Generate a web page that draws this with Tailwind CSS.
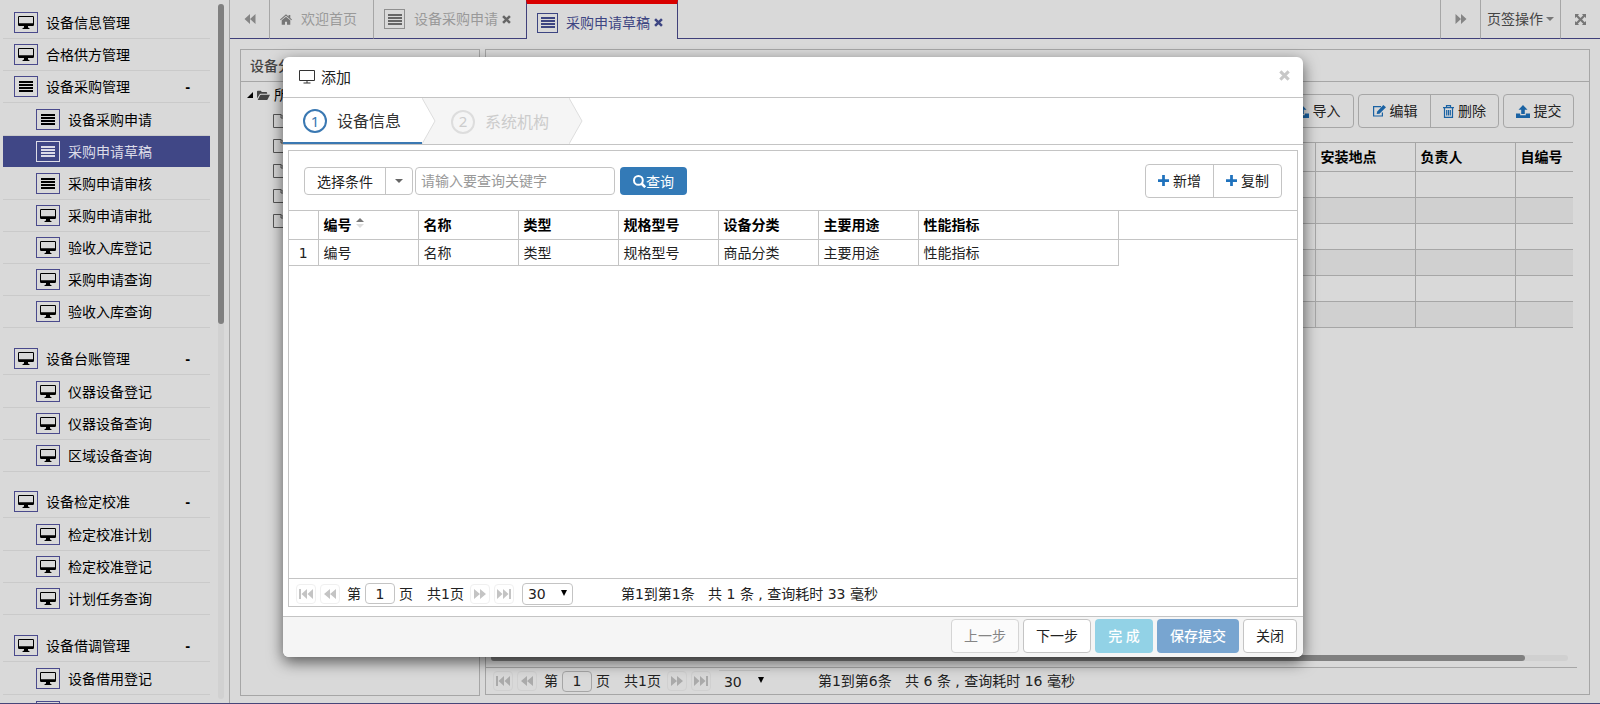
<!DOCTYPE html>
<html lang="zh-CN">
<head>
<meta charset="utf-8">
<title>设备采购管理</title>
<script src="https://cdn.jsdelivr.net/npm/@tailwindcss/browser@4"></script>
</head>
<body class="relative flex h-screen flex-col overflow-hidden border-b border-[#46467a] bg-[#d9d9d9] font-['Noto_Sans','Noto_Sans_CJK_SC',sans-serif] text-sm leading-5 text-black">

<svg class="hidden" aria-hidden="true">
  <symbol id="desktop" viewBox="0 0 16 13"><path fill="currentColor" fill-rule="evenodd" d="M1.200 0h13.600A1.200 1.200 0 0 1 16 1.200v7.600a1.200 1.200 0 0 1-1.200 1.200H10v1.500l1.500.7v.8h-7v-.8L6 11.500V10H1.200A1.200 1.200 0 0 1 0 8.800V1.200A1.200 1.200 0 0 1 1.200 0zM1 1v6.200h14V1z"/></symbol>
  <symbol id="lines" viewBox="0 0 14 11"><path fill="currentColor" d="M0 0h14v2H0zM0 3h14v2H0zM0 6h14v2H0zM0 9h14v2H0z"/></symbol>
  <symbol id="back" viewBox="0 0 12 10"><path fill="currentColor" d="M6 0v10L.5 5zM11.500 0v10L6 5z"/></symbol>
  <symbol id="forward" viewBox="0 0 12 10"><path fill="currentColor" d="M.5 0v10L6 5zM6 0v10l5.500-5z"/></symbol>
  <symbol id="pfirst" viewBox="0 0 14 12"><path fill="currentColor" d="M0 1h2v10H0zM8 1v10L2.500 6zM14 1v10L8.500 6z"/></symbol>
  <symbol id="pprev" viewBox="0 0 14 12"><path fill="currentColor" d="M7 1v10L1 6zM13 1v10L7 6z"/></symbol>
  <symbol id="pnext" viewBox="0 0 14 12"><path fill="currentColor" d="M1 1v10l6-5zM7 1v10l6-5z"/></symbol>
  <symbol id="plast" viewBox="0 0 14 12"><path fill="currentColor" d="M12 1h2v10h-2zM0 1v10l5.500-5zM6 1v10l5.500-5z"/></symbol>
  <symbol id="home" viewBox="0 0 14 12"><path fill="currentColor" d="M7 0 0 6l.8.9L7 1.700l6.200 5.200.8-.9-2-1.700V.8h-2v1.700zM2 6.800V12h3.800V8.500h2.400V12H12V6.800L7 2.700z"/></symbol>
  <symbol id="times" viewBox="0 0 10 10"><path fill="none" stroke="currentColor" stroke-width="2.800" d="m1.200 1.200 7.600 7.600m0-7.600L1.200 8.800"/></symbol>
  <symbol id="expand" viewBox="0 0 12 12"><path fill="currentColor" d="M0 0h4.500L3.100 1.400 6 4.300l2.900-2.900L7.500 0H12v4.500l-1.400-1.400L7.700 6l2.900 2.900L12 7.500V12H7.500l1.400-1.400L6 7.700l-2.900 2.900L4.500 12H0V7.500l1.400 1.400L4.300 6 1.400 3.100 0 4.500z"/></symbol>
  <symbol id="caret" viewBox="0 0 8 4"><path fill="currentColor" d="M0 0h8L4 4z"/></symbol>
  <symbol id="drop" viewBox="0 0 6 6"><path fill="currentColor" d="M0 0h6L3 6z"/></symbol>
  <symbol id="folder" viewBox="0 0 15 12"><path fill="currentColor" d="M0 9.500V1.500Q0 .5 1 .5h3.500l1 1.500h5.200q1 0 1 1V4H4.200Q3.200 4 2.700 5zM.8 11.300 3.500 5.800Q3.800 5 4.800 5H15l-2.800 5.500q-.5.8-1.500.8z"/></symbol>
  <symbol id="file" viewBox="0 0 12 14"><path fill="none" stroke="currentColor" d="M.5.5H8l3.500 3.500v9.500H.5zM8 .5V4h3.500"/></symbol>
  <symbol id="upload" viewBox="0 0 14 13"><path fill="currentColor" d="M7 0 2.500 4.800h2.700V9h3.600V4.800h2.700zM0 8.500h4.200v1.700h5.600V8.500H14V13H0z"/></symbol>
  <symbol id="edit" viewBox="0 0 14 12"><path fill="none" stroke="currentColor" stroke-width="1.200" d="M9 1.600H1.600V11h8.800V7.500"/><path fill="currentColor" d="m4.700 9 .5-2.500L11.300 0 14 2.300 7.500 8.700z"/></symbol>
  <symbol id="trash" viewBox="0 0 11 13"><path fill="none" stroke="currentColor" stroke-width="1.200" d="M0 2.600h11M3.500 2.500V.700h4v1.800M1.500 3v9.300h8V3M3.700 5v5.500M5.500 5v5.500M7.300 5v5.500"/></symbol>
  <symbol id="plus" viewBox="0 0 12 12"><path fill="currentColor" d="M4.500 0h3v4.500H12v3H7.500V12h-3V7.500H0v-3h4.500z"/></symbol>
  <symbol id="search" viewBox="0 0 13 13"><path fill="none" stroke="currentColor" stroke-width="2" d="M9.800 5.400a4.400 4.400 0 1 1-8.800 0 4.400 4.400 0 0 1 8.800 0z"/><path stroke="currentColor" stroke-width="2.600" d="m8.500 8.500 3.700 3.700"/></symbol>
</svg>

<div class="flex min-h-0 flex-1">
  <!-- Side menu -->
  <aside class="flex w-[230px] shrink-0 justify-between overflow-hidden border-r border-[#a6a6a6]">
    <nav class="ml-[3px] w-[207px] shrink-0 pt-[7px]">
      <a href="#" class="flex h-8 items-center gap-2 border-b border-[#cacaca] pl-[11px]"><span class="flex h-[21px] w-6 items-center justify-center border border-[#4a4a8c]"><svg class="h-[13px] w-4"><use href="#desktop"/></svg></span>设备信息管理</a>
      <a href="#" class="flex h-8 items-center gap-2 border-b border-[#cacaca] pl-[11px]"><span class="flex h-[21px] w-6 items-center justify-center border border-[#4a4a8c]"><svg class="h-[13px] w-4"><use href="#desktop"/></svg></span>合格供方管理</a>

      <a href="#" class="flex h-8 items-center gap-2 border-b border-[#cacaca] pl-[11px]"><span class="flex h-[21px] w-6 items-center justify-center border border-[#4a4a8c]"><svg class="h-[11px] w-[14px]"><use href="#lines"/></svg></span><span class="flex-1">设备采购管理</span><span class="mr-5 font-bold">-</span></a>
      <div class="mb-[15px] pt-px">
        <a href="#" class="flex h-8 items-center gap-2 border-b border-[#cacaca] pl-[33px]"><span class="flex h-[21px] w-6 items-center justify-center border border-[#4a4a8c]"><svg class="h-[11px] w-[14px]"><use href="#lines"/></svg></span>设备采购申请</a>
        <a href="#" class="flex h-8 items-center gap-2 border-b border-[#d9d9d9] bg-[#404786] pl-[33px] text-[#dcdce8]"><span class="flex h-[21px] w-6 items-center justify-center border border-[#dcdce8]"><svg class="h-[11px] w-[14px]"><use href="#lines"/></svg></span>采购申请草稿</a>
        <a href="#" class="flex h-8 items-center gap-2 border-b border-[#cacaca] pl-[33px]"><span class="flex h-[21px] w-6 items-center justify-center border border-[#4a4a8c]"><svg class="h-[11px] w-[14px]"><use href="#lines"/></svg></span>采购申请审核</a>
        <a href="#" class="flex h-8 items-center gap-2 border-b border-[#cacaca] pl-[33px]"><span class="flex h-[21px] w-6 items-center justify-center border border-[#4a4a8c]"><svg class="h-[13px] w-4"><use href="#desktop"/></svg></span>采购申请审批</a>
        <a href="#" class="flex h-8 items-center gap-2 border-b border-[#cacaca] pl-[33px]"><span class="flex h-[21px] w-6 items-center justify-center border border-[#4a4a8c]"><svg class="h-[13px] w-4"><use href="#desktop"/></svg></span>验收入库登记</a>
        <a href="#" class="flex h-8 items-center gap-2 border-b border-[#cacaca] pl-[33px]"><span class="flex h-[21px] w-6 items-center justify-center border border-[#4a4a8c]"><svg class="h-[13px] w-4"><use href="#desktop"/></svg></span>采购申请查询</a>
        <a href="#" class="flex h-8 items-center gap-2 border-b border-[#cacaca] pl-[33px]"><span class="flex h-[21px] w-6 items-center justify-center border border-[#4a4a8c]"><svg class="h-[13px] w-4"><use href="#desktop"/></svg></span>验收入库查询</a>
      </div>

      <a href="#" class="flex h-8 items-center gap-2 border-b border-[#cacaca] pl-[11px]"><span class="flex h-[21px] w-6 items-center justify-center border border-[#4a4a8c]"><svg class="h-[13px] w-4"><use href="#desktop"/></svg></span><span class="flex-1">设备台账管理</span><span class="mr-5 font-bold">-</span></a>
      <div class="mb-[14px] pt-px">
        <a href="#" class="flex h-8 items-center gap-2 border-b border-[#cacaca] pl-[33px]"><span class="flex h-[21px] w-6 items-center justify-center border border-[#4a4a8c]"><svg class="h-[13px] w-4"><use href="#desktop"/></svg></span>仪器设备登记</a>
        <a href="#" class="flex h-8 items-center gap-2 border-b border-[#cacaca] pl-[33px]"><span class="flex h-[21px] w-6 items-center justify-center border border-[#4a4a8c]"><svg class="h-[13px] w-4"><use href="#desktop"/></svg></span>仪器设备查询</a>
        <a href="#" class="flex h-8 items-center gap-2 border-b border-[#cacaca] pl-[33px]"><span class="flex h-[21px] w-6 items-center justify-center border border-[#4a4a8c]"><svg class="h-[13px] w-4"><use href="#desktop"/></svg></span>区域设备查询</a>
      </div>

      <a href="#" class="flex h-8 items-center gap-2 border-b border-[#cacaca] pl-[11px]"><span class="flex h-[21px] w-6 items-center justify-center border border-[#4a4a8c]"><svg class="h-[13px] w-4"><use href="#desktop"/></svg></span><span class="flex-1">设备检定校准</span><span class="mr-5 font-bold">-</span></a>
      <div class="mb-[15px] pt-px">
        <a href="#" class="flex h-8 items-center gap-2 border-b border-[#cacaca] pl-[33px]"><span class="flex h-[21px] w-6 items-center justify-center border border-[#4a4a8c]"><svg class="h-[13px] w-4"><use href="#desktop"/></svg></span>检定校准计划</a>
        <a href="#" class="flex h-8 items-center gap-2 border-b border-[#cacaca] pl-[33px]"><span class="flex h-[21px] w-6 items-center justify-center border border-[#4a4a8c]"><svg class="h-[13px] w-4"><use href="#desktop"/></svg></span>检定校准登记</a>
        <a href="#" class="flex h-8 items-center gap-2 border-b border-[#cacaca] pl-[33px]"><span class="flex h-[21px] w-6 items-center justify-center border border-[#4a4a8c]"><svg class="h-[13px] w-4"><use href="#desktop"/></svg></span>计划任务查询</a>
      </div>

      <a href="#" class="flex h-8 items-center gap-2 border-b border-[#cacaca] pl-[11px]"><span class="flex h-[21px] w-6 items-center justify-center border border-[#4a4a8c]"><svg class="h-[13px] w-4"><use href="#desktop"/></svg></span><span class="flex-1">设备借调管理</span><span class="mr-5 font-bold">-</span></a>
      <div class="pt-px">
        <a href="#" class="flex h-8 items-center gap-2 border-b border-[#cacaca] pl-[33px]"><span class="flex h-[21px] w-6 items-center justify-center border border-[#4a4a8c]"><svg class="h-[13px] w-4"><use href="#desktop"/></svg></span>设备借用登记</a>
        <a href="#" class="flex h-8 items-center gap-2 pl-[33px]"><span class="flex h-[21px] w-6 items-center justify-center border border-[#4a4a8c]"><svg class="h-[13px] w-4"><use href="#desktop"/></svg></span></a>
      </div>
    </nav>
    <div class="mt-1 mr-[5px] mb-1 w-1.5 rounded-full bg-[#d1d1d1]"><div class="h-[46%] rounded-full bg-[#808080]"></div></div>
  </aside>

  <main class="flex min-w-0 flex-1 flex-col">
    <!-- Tab bar -->
    <header class="flex h-[39px] shrink-0 text-[#858585]">
      <button aria-label="向左" class="flex w-10 items-center justify-center border-r border-b border-r-[#a6a6a6] border-b-[#40407a]"><svg class="h-[10px] w-3"><use href="#back"/></svg></button>
      <a href="#" class="flex w-[104px] items-center gap-[9px] border-r border-b border-r-[#a6a6a6] border-b-[#40407a] pl-[10px] text-[#999]"><svg class="h-[11px] w-3 text-[#777]"><use href="#home"/></svg>欢迎首页</a>
      <a href="#" class="flex w-[152px] items-center border-b border-[#40407a] pl-[10px] text-[#999]"><span class="mr-[9px] flex h-5 w-[21px] items-center justify-center border border-[#8f8f8f] text-[#666]"><svg class="h-[11px] w-[14px]"><use href="#lines"/></svg></span>设备采购申请<svg class="ml-1 h-[9px] w-[9px] text-[#666]"><use href="#times"/></svg></a>
      <a href="#" class="flex w-[152px] items-center border-x border-t-4 border-x-[#40407a] border-t-[#d90000] pt-0.5 pl-[10px] text-[#3d4582]"><span class="mr-2 flex h-5 w-[21px] items-center justify-center border border-[#3d4582]"><svg class="h-[11px] w-[14px]"><use href="#lines"/></svg></span>采购申请草稿<svg class="ml-1 h-[9px] w-[9px]"><use href="#times"/></svg></a>
      <div class="flex-1 border-b border-[#40407a]"></div>
      <button aria-label="向右" class="flex w-10 items-center justify-center border-b border-l border-b-[#40407a] border-l-[#a6a6a6]"><svg class="h-[10px] w-3"><use href="#forward"/></svg></button>
      <button class="flex w-20 items-center justify-center gap-[3px] border-b border-l border-b-[#40407a] border-l-[#a6a6a6] text-[#444]">页签操作<svg class="h-1 w-2 text-[#777]"><use href="#caret"/></svg></button>
      <button aria-label="全屏" class="flex w-10 items-center justify-center border-b border-l border-b-[#40407a] border-l-[#a6a6a6] text-[#777]"><svg class="h-[11px] w-[11px]"><use href="#expand"/></svg></button>
    </header>

    <div class="flex min-h-0 flex-1 gap-[5px] pt-[10px] pr-[10px] pb-[7px] pl-[10px]">
      <!-- Category tree -->
      <section class="w-[240px] shrink-0 border border-[#a6a6a6]">
        <h2 class="flex h-8 items-center border-b border-[#a6a6a6] pl-[9px] font-medium text-[#444]">设备分类</h2>
        <div class="flex h-[26px] items-center pl-[6px]"><svg class="mr-1 h-1.5 w-1.5" viewBox="0 0 6 6"><path d="M6 0v6H0z"/></svg><svg class="mr-1 h-[11px] w-[13px] text-[#444]"><use href="#folder"/></svg>所有</div>
        <ul class="pl-8 text-[#555]">
          <li class="flex h-[25px] items-center"><svg class="h-[14px] w-3"><use href="#file"/></svg></li>
          <li class="flex h-[25px] items-center"><svg class="h-[14px] w-3"><use href="#file"/></svg></li>
          <li class="flex h-[25px] items-center"><svg class="h-[14px] w-3"><use href="#file"/></svg></li>
          <li class="flex h-[25px] items-center"><svg class="h-[14px] w-3"><use href="#file"/></svg></li>
          <li class="flex h-[25px] items-center"><svg class="h-[14px] w-3"><use href="#file"/></svg></li>
        </ul>
      </section>

      <!-- Draft list -->
      <section class="mb-px flex min-w-0 flex-1 flex-col border border-[#a6a6a6]">
        <div class="h-8 shrink-0 border-b border-[#a6a6a6]"></div>
        <div class="flex shrink-0 justify-end gap-1 pt-3 pr-[15px] text-[#222]">
          <button class="flex h-[34px] w-[73px] items-center justify-center gap-1 rounded border border-[#a6a6a6]"><svg class="h-[13px] w-[14px] text-[#1a62a3]"><use href="#upload"/></svg>导入</button>
          <div class="flex h-[34px] rounded border border-[#a6a6a6]">
            <button class="flex w-[72px] items-center justify-center gap-1 border-r border-[#a6a6a6]"><svg class="h-3 w-[14px] text-[#1a62a3]"><use href="#edit"/></svg>编辑</button>
            <button class="flex w-[67px] items-center justify-center gap-1"><svg class="h-[13px] w-[11px] text-[#1a62a3]"><use href="#trash"/></svg>删除</button>
          </div>
          <button class="flex h-[34px] w-[71px] items-center justify-center gap-1 rounded border border-[#a6a6a6]"><svg class="h-[13px] w-[14px] text-[#1a62a3]"><use href="#upload"/></svg>提交</button>
        </div>
        <div class="mt-[14px] min-h-0 flex-1 pr-4 pl-[5px]">
          <table class="w-full table-fixed border-t border-[#a6a6a6] text-left">
            <thead><tr class="h-[29px] border-b border-[#a6a6a6]"><th></th><th class="w-[100px] border-l border-[#a6a6a6] pl-[5px]">安装地点</th><th class="w-[100px] border-l border-[#a6a6a6] pl-[5px]">负责人</th><th class="w-[58px] border-l border-[#a6a6a6] pl-[5px] whitespace-nowrap">自编号</th></tr></thead>
            <tbody>
              <tr class="h-[26px] border-b border-[#a6a6a6]"><td></td><td class="border-l border-[#a6a6a6]"></td><td class="border-l border-[#a6a6a6]"></td><td class="border-l border-[#a6a6a6]"></td></tr>
              <tr class="h-[26px] border-b border-[#a6a6a6] bg-[#d0d0d0]"><td></td><td class="border-l border-[#a6a6a6]"></td><td class="border-l border-[#a6a6a6]"></td><td class="border-l border-[#a6a6a6]"></td></tr>
              <tr class="h-[26px] border-b border-[#a6a6a6]"><td></td><td class="border-l border-[#a6a6a6]"></td><td class="border-l border-[#a6a6a6]"></td><td class="border-l border-[#a6a6a6]"></td></tr>
              <tr class="h-[26px] border-b border-[#a6a6a6] bg-[#d0d0d0]"><td></td><td class="border-l border-[#a6a6a6]"></td><td class="border-l border-[#a6a6a6]"></td><td class="border-l border-[#a6a6a6]"></td></tr>
              <tr class="h-[26px] border-b border-[#a6a6a6]"><td></td><td class="border-l border-[#a6a6a6]"></td><td class="border-l border-[#a6a6a6]"></td><td class="border-l border-[#a6a6a6]"></td></tr>
              <tr class="h-[26px] border-b border-[#a6a6a6] bg-[#d0d0d0]"><td></td><td class="border-l border-[#a6a6a6]"></td><td class="border-l border-[#a6a6a6]"></td><td class="border-l border-[#a6a6a6]"></td></tr>
            </tbody>
          </table>
        </div>
        <div class="mr-[21px] mb-[6px] ml-[5px] h-1.5 shrink-0 rounded-full bg-[#d0d0d0]"><div class="h-full w-[96%] rounded-full bg-[#808080]"></div></div>
        <div class="mr-3 flex h-[27px] shrink-0 items-center border-t border-[#a6a6a6] pl-[7px] font-['DejaVu_Sans','Noto_Sans_CJK_SC',sans-serif] text-[#222]">
          <button aria-label="首页" class="flex h-5 w-5 items-center justify-center rounded border border-[#d0d0d0] text-[#aaa]"><svg class="h-3 w-[14px]"><use href="#pfirst"/></svg></button>
          <button aria-label="上一页" class="ml-1 flex h-5 w-5 items-center justify-center rounded border border-[#d0d0d0] text-[#aaa]"><svg class="h-3 w-[14px]"><use href="#pprev"/></svg></button>
          <label class="ml-[7px] flex items-center gap-1">第<input aria-label="页码" value="1" class="h-[21px] w-[30px] rounded border border-[#a6a6a6] text-center">页</label>
          <span class="mx-[6px] pl-2">共1页</span>
          <button aria-label="下一页" class="flex h-5 w-5 items-center justify-center rounded border border-[#d0d0d0] text-[#aaa]"><svg class="h-3 w-[14px]"><use href="#pnext"/></svg></button>
          <button aria-label="末页" class="ml-1 flex h-5 w-5 items-center justify-center rounded border border-[#d0d0d0] text-[#aaa]"><svg class="h-3 w-[14px]"><use href="#plast"/></svg></button>
          <span class="relative ml-2 flex"><select aria-label="每页条数" class="h-[22px] w-[51px] appearance-none border-t border-[#c4c4c4] pl-[5px]"><option>30</option></select><svg class="pointer-events-none absolute top-[7px] right-[6px] h-1.5 w-1.5 text-black"><use href="#drop"/></svg></span>
          <span class="ml-12 whitespace-pre">第1到第6条   共 6 条 , 查询耗时 16 毫秒</span>
        </div>
      </section>
    </div>
  </main>
</div>

<!-- Add dialog -->
<div role="dialog" aria-labelledby="dlg-title" class="absolute top-[57px] right-[297px] bottom-[46px] left-[283px] flex flex-col overflow-hidden rounded-md bg-white text-[#222] shadow-[0_5px_15px_rgba(0,0,0,0.6)]">
  <div class="flex h-[41px] shrink-0 items-center border-b border-[#c4c4c4] pr-[13px] pl-4">
    <svg class="mr-[6px] h-[14px] w-4 text-[#333]" viewBox="0 0 16 14"><path fill="none" stroke="currentColor" d="M.5.500h15v10H.5zM8 10.500v2.500M4.500 13h7"/></svg>
    <h2 id="dlg-title" class="flex-1 text-[15px]">添加</h2>
    <button aria-label="关闭窗口" class="mb-1 text-[#c8c8c8]"><svg class="h-[11px] w-[11px]"><use href="#times"/></svg></button>
  </div>
  <ol class="flex h-[47px] shrink-0 border-b border-[#c4c4c4] text-base">
    <li class="flex w-[139px] items-center gap-[10px] border-b-2 border-[#3a78b2] pt-0.5 pl-5 text-[#333]"><span class="flex h-6 w-6 items-center justify-center rounded-full border-2 border-[#3a78b2] text-[15px] text-[#3a78b2]">1</span>设备信息</li>
    <li class="relative flex w-[147px] items-center gap-[10px] bg-[#f5f5f5] pt-px pl-[29px] text-[#ccc]">
      <svg class="absolute top-0 left-0 h-full w-[14px]" viewBox="0 0 14 46" preserveAspectRatio="none"><path fill="#fff" stroke="#ddd" d="M0 0 13 23 0 46"/></svg>
      <span class="flex h-6 w-6 items-center justify-center rounded-full border-2 border-[#ddd] text-[15px]">2</span>系统机构
      <svg class="absolute top-0 left-full h-full w-[14px]" viewBox="0 0 14 46" preserveAspectRatio="none"><path fill="#f5f5f5" stroke="#ddd" d="M0 0 13 23 0 46"/></svg>
    </li>
  </ol>

  <div class="mx-[5px] mt-[5px] mb-[9px] flex min-h-0 flex-1 flex-col border border-[#c4c4c4]">
    <div class="flex h-[59px] shrink-0 items-center pr-[15px] pl-[15px]">
      <div class="flex h-7 rounded border border-[#c4c4c4]">
        <button class="w-[81px] border-r border-[#c4c4c4] pt-0.5">选择条件</button>
        <button aria-label="展开条件" class="flex w-[26px] items-center justify-center text-[#666]"><svg class="h-1 w-2"><use href="#caret"/></svg></button>
      </div>
      <input aria-label="关键字" placeholder="请输入要查询关键字" class="ml-0.5 h-7 w-[200px] rounded border border-[#c4c4c4] pl-[5px] placeholder:text-[#999]">
      <button class="ml-[5px] flex h-7 w-[67px] items-center justify-center rounded bg-[#337ab7] pt-0.5 text-white"><svg class="h-[13px] w-[13px]"><use href="#search"/></svg>查询</button>
      <div class="ml-auto flex h-[34px] rounded border border-[#c4c4c4]">
        <button class="flex w-[68px] items-center justify-center gap-1 border-r border-[#c4c4c4]"><svg class="h-[11px] w-[11px] text-[#1f72bd]"><use href="#plus"/></svg>新增</button>
        <button class="flex w-[67px] items-center justify-center gap-1"><svg class="h-[11px] w-[11px] text-[#1f72bd]"><use href="#plus"/></svg>复制</button>
      </div>
    </div>
    <div class="min-h-0 flex-1">
      <table class="w-full table-fixed text-left">
        <thead><tr class="h-[29px] border-y border-[#c4c4c4] text-black">
          <th class="w-[29px] border-r border-[#c4c4c4]"></th>
          <th class="w-[100px] border-r border-[#c4c4c4] pl-[5px]"><button class="flex items-center gap-1">编号<svg class="mb-1 h-[10px] w-2" viewBox="0 0 8 10"><path fill="#777" d="M0 4h8L4 0z"/><path fill="#ddd" d="M0 6h8l-4 4z"/></svg></button></th>
          <th class="w-[100px] border-r border-[#c4c4c4] pl-[5px]">名称</th>
          <th class="w-[100px] border-r border-[#c4c4c4] pl-[5px]">类型</th>
          <th class="w-[100px] border-r border-[#c4c4c4] pl-[5px]">规格型号</th>
          <th class="w-[100px] border-r border-[#c4c4c4] pl-[5px]">设备分类</th>
          <th class="w-[100px] border-r border-[#c4c4c4] pl-[5px]">主要用途</th>
          <th class="w-[200px] border-r border-[#c4c4c4] pl-[5px]">性能指标</th>
          <th></th>
        </tr></thead>
        <tbody><tr class="h-[26px]">
          <td class="border-r border-b border-[#c4c4c4] text-center font-['DejaVu_Sans']">1</td>
          <td class="border-r border-b border-[#c4c4c4] pl-[5px]">编号</td>
          <td class="border-r border-b border-[#c4c4c4] pl-[5px]">名称</td>
          <td class="border-r border-b border-[#c4c4c4] pl-[5px]">类型</td>
          <td class="border-r border-b border-[#c4c4c4] pl-[5px]">规格型号</td>
          <td class="border-r border-b border-[#c4c4c4] pl-[5px]">商品分类</td>
          <td class="border-r border-b border-[#c4c4c4] pl-[5px]">主要用途</td>
          <td class="border-r border-b border-[#c4c4c4] pl-[5px]">性能指标</td>
          <td></td>
        </tr></tbody>
      </table>
    </div>
    <div class="flex h-7 shrink-0 items-center border-t border-[#c4c4c4] pt-0.5 pl-[7px] font-['DejaVu_Sans','Noto_Sans_CJK_SC',sans-serif]">
      <button aria-label="首页" class="flex h-5 w-5 items-center justify-center rounded border border-[#f0f0f0] text-[#c4c4c4]"><svg class="h-3 w-[14px]"><use href="#pfirst"/></svg></button>
      <button aria-label="上一页" class="ml-1 flex h-5 w-5 items-center justify-center rounded border border-[#f0f0f0] text-[#c4c4c4]"><svg class="h-3 w-[14px]"><use href="#pprev"/></svg></button>
      <label class="ml-[7px] flex items-center gap-1">第<input aria-label="页码" value="1" class="h-[21px] w-[30px] rounded border border-[#c4c4c4] text-center">页</label>
      <span class="mx-[6px] pl-2">共1页</span>
      <button aria-label="下一页" class="flex h-5 w-5 items-center justify-center rounded border border-[#f0f0f0] text-[#c4c4c4]"><svg class="h-3 w-[14px]"><use href="#pnext"/></svg></button>
      <button aria-label="末页" class="ml-1 flex h-5 w-5 items-center justify-center rounded border border-[#f0f0f0] text-[#c4c4c4]"><svg class="h-3 w-[14px]"><use href="#plast"/></svg></button>
      <span class="relative ml-2 flex"><select aria-label="每页条数" class="h-[22px] w-[51px] appearance-none rounded border border-[#c4c4c4] pl-[5px]"><option>30</option></select><svg class="pointer-events-none absolute top-[7px] right-[6px] h-1.5 w-1.5 text-black"><use href="#drop"/></svg></span>
      <span class="ml-12 whitespace-pre">第1到第1条   共 1 条 , 查询耗时 33 毫秒</span>
    </div>
  </div>

  <div class="flex h-[41px] shrink-0 items-start justify-end gap-1 border-t border-[#c4c4c4] bg-[#f5f5f5] pt-0.5 pr-[6px]">
    <button disabled class="h-[34px] w-[68px] rounded border border-[#d5d5d5] bg-[#fbfbfb] text-[#858585]">上一步</button>
    <button class="h-[34px] w-[68px] rounded border border-[#c4c4c4] bg-white">下一步</button>
    <button disabled class="h-[34px] w-[58px] rounded bg-[#92d2e6] font-medium text-white">完 成</button>
    <button disabled class="h-[34px] w-[82px] rounded bg-[#78a5d0] font-medium text-white">保存提交</button>
    <button class="h-[34px] w-[54px] rounded border border-[#c4c4c4] bg-white">关闭</button>
  </div>
</div>
</body>
</html>
